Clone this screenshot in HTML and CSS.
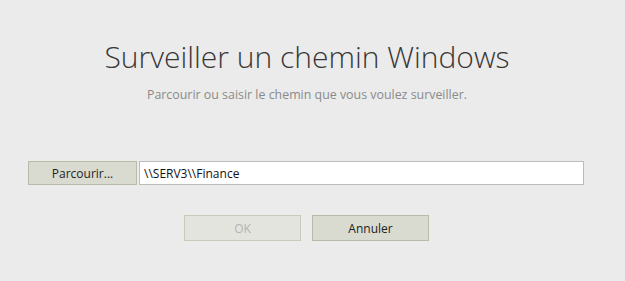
FILE: index.html
```html
<!DOCTYPE html>
<html lang="fr">
<head>
    <meta charset="UTF-8">
    <title>Surveiller un chemin Windows</title>
    <link rel="stylesheet" href="styles.css">
</head>
<body>
    <div class="dialog">
        <h1>Surveiller un chemin Windows</h1>
        <p class="hint">Parcourir ou saisir le chemin que vous voulez surveiller.</p>

        <div class="path-row">
            <button type="button" class="btn">Parcourir...</button>
            <input type="text" class="path-input" value="\\SERV3\\Finance">
        </div>

        <div class="button-group">
            <button type="button" class="btn btn-wide" disabled>OK</button>
            <button type="button" class="btn btn-wide">Annuler</button>
        </div>
    </div>
</body>
</html>
```

FILE: styles.css
```css
body {
    margin: 0;
    background-color: #ebebeb;
    font-family: "Open Sans", "Noto Sans", sans-serif;
    color: #222;
}
.dialog {
    width: 625px;
    height: 281px;
    padding: 36px 11px 0 0;
    box-sizing: border-box;
}
h1 {
    margin: 0;
    text-align: center;
    font-size: 30px;
    font-weight: 300;
    color: #383838;
    height: 42px;
    line-height: 42px;
}
.hint {
    margin: 8px 0 0;
    text-align: center;
    font-size: 12.4px;
    color: #8a8a8a;
}
.path-row {
    display: flex;
    gap: 2px;
    margin: 58px 30px 0 28px;
}
.btn {
    height: 24px;
    padding: 0;
    border: 1px solid #b7bba9;
    background-color: #d9dbd1;
    font-family: "Open Sans", "Noto Sans", sans-serif;
    font-size: 12px;
    color: #222;
    cursor: pointer;
}
.path-row .btn {
    width: 109px;
}
.path-input {
    flex: 1;
    height: 24px;
    box-sizing: border-box;
    padding: 0 4px;
    border: 1px solid #bcbcbc;
    background-color: #fff;
    font-family: "Open Sans", "Noto Sans", sans-serif;
    font-size: 12px;
    color: #111;
    outline: none;
}
.button-group {
    display: flex;
    justify-content: center;
    gap: 11px;
    margin-top: 30px;
    padding-right: 1px;
}
.btn-wide {
    width: 117px;
    height: 26px;
}
.btn:disabled {
    background-color: #e3e4de;
    border-color: #c6cbb9;
    color: #b3b3b3;
    cursor: default;
}
```
